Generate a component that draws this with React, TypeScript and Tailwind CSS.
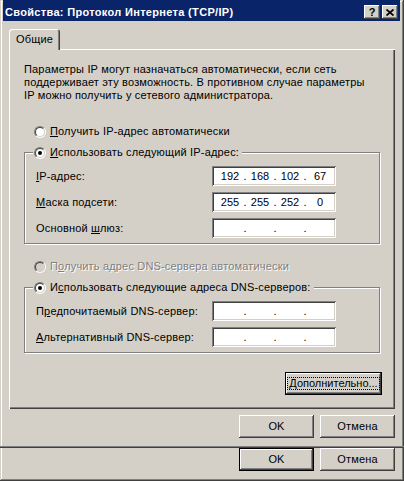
import React from "react";

const BEVEL =
  "shadow-[inset_-1px_-1px_#404040,inset_1px_1px_#fff,inset_-2px_-2px_#808080,inset_2px_2px_#d4d0c8]";

function U({ children }: { children: React.ReactNode }) {
  return <span className="underline underline-offset-[1px]">{children}</span>;
}

function Radio({ checked, disabled }: { checked?: boolean; disabled?: boolean }) {
  return (
    <span className="flex shrink-0 w-[12px] h-[12px] rounded-full border border-t-[#808080] border-l-[#808080] border-b-white border-r-white">
      <span
        className={
          disabled
            ? "flex items-center justify-center w-full h-full rounded-full border border-t-[#404040] border-l-[#404040] border-b-[#d4d0c8] border-r-[#d4d0c8] bg-[#d4d0c8]"
            : "flex items-center justify-center w-full h-full rounded-full border border-t-[#404040] border-l-[#404040] border-b-[#d4d0c8] border-r-[#d4d0c8] bg-white"
        }
      >
        {checked && <span className="w-[4px] h-[4px] rounded-full bg-black" />}
      </span>
    </span>
  );
}

function IpField({ value }: { value: string[] }) {
  return (
    <div className="flex items-center w-[124px] h-[20px] bg-white pl-[7px] tracking-normal shadow-[inset_1px_1px_#808080,inset_-1px_-1px_#fff,inset_2px_2px_#404040,inset_-2px_-2px_#d4d0c8]">
      {value.map((v, i) => (
        <React.Fragment key={i}>
          <span className="w-[22px] text-center">{v}</span>
          {i < 3 && <span className="w-[8px] text-center">.</span>}
        </React.Fragment>
      ))}
    </div>
  );
}

function Row({ label, value, first }: { label: React.ReactNode; value: string[]; first?: boolean }) {
  return (
    <div className={first ? "mt-[7px] flex items-center h-[20px]" : "mt-[6px] flex items-center h-[20px]"}>
      <span className="w-[176px] whitespace-nowrap">{label}</span>
      <IpField value={value} />
    </div>
  );
}

function Button({ children, def }: { children: React.ReactNode; def?: boolean }) {
  return (
    <div
      className={
        def
          ? "flex items-center justify-center w-[75px] h-[23px] bg-[#d4d0c8] border border-black " + BEVEL
          : "flex items-center justify-center w-[75px] h-[23px] bg-[#d4d0c8] " + BEVEL
      }
    >
      {children}
    </div>
  );
}

function CapBtn({ children }: { children: React.ReactNode }) {
  return (
    <div
      className={
        "flex items-center justify-center w-[16px] h-[14px] bg-[#d4d0c8] text-black font-bold text-[11px] leading-none tracking-normal " +
        BEVEL
      }
    >
      {children}
    </div>
  );
}

const empty = ["", "", "", ""];

export default function App() {
  return (
    <div className="relative flex flex-col w-[404px] h-[481px] overflow-hidden bg-[#d4d0c8] font-['Liberation_Sans',Arial,sans-serif] text-[11px] leading-[13px] tracking-[0.17px] text-black shadow-[inset_-1px_-1px_#404040,inset_1px_1px_#d4d0c8,inset_-2px_-2px_#808080,inset_2px_2px_#fff]">
      {/* caption */}
      <div className="flex items-center ml-[3px] mr-[4px] h-[21px] shrink-0 bg-[#0a246a] pl-[2px] pr-[2px]">
        <div className="flex-1 pt-[3px] font-bold text-white whitespace-nowrap tracking-[0.32px]">
          Свойства: Протокол Интернета (TCP/IP)
        </div>
        <div className="flex gap-[2px] mt-[3px]">
          <CapBtn>
            <span className="pt-[1px]">?</span>
          </CapBtn>
          <CapBtn>
            <svg width="8" height="7" viewBox="0 0 8 7">
              <path d="M0.5 0.5 L7.5 6.5 M7.5 0.5 L0.5 6.5" stroke="#000" strokeWidth="1.7" fill="none" />
            </svg>
          </CapBtn>
        </div>
      </div>

      {/* tab */}
      <div className="relative z-10 mt-[8px] ml-[9px] -mb-[1px] flex items-center justify-center w-[51px] h-[21px] shrink-0 bg-[#d4d0c8] rounded-t-[3px] shadow-[inset_1px_1px_#fff,inset_-1px_0_#404040,inset_-2px_0_#808080]">
        Общие
      </div>

      {/* tab page */}
      <div className="flex flex-col ml-[9px] w-[386px] h-[360px] shrink-0 pt-[14px] px-[15px] shadow-[inset_1px_1px_#fff,inset_-1px_-1px_#404040,inset_-2px_-2px_#808080]">
        <p className="whitespace-nowrap">
          Параметры IP могут назначаться автоматически, если сеть
          <br />
          поддерживает эту возможность. В противном случае параметры
          <br />
          IP можно получить у сетевого администратора.
        </p>

        <div className="mt-[23px] ml-[10px] flex items-center gap-[4px] h-[13px]">
          <Radio />
          <span>
            <U>П</U>олучить IP-адрес автоматически
          </span>
        </div>

        <div className="mt-[14px] flex flex-col pl-[11px] pb-[5px] border border-[#808080] shadow-[inset_1px_1px_#fff,1px_1px_#fff]">
          <div className="-mt-[7px] -ml-[3px] self-start flex items-center gap-[4px] h-[13px] bg-[#d4d0c8] pl-[1px] pr-[3px]">
            <Radio checked />
            <span>
              <U>И</U>спользовать следующий IP-адрес:
            </span>
          </div>
          <Row first label={<><U>I</U>P-адрес:</>} value={["192", "168", "102", "67"]} />
          <Row label={<><U>М</U>аска подсети:</>} value={["255", "255", "252", "0"]} />
          <Row label={<>Основной <U>ш</U>люз:</>} value={empty} />
        </div>

        <div className="mt-[16px] ml-[10px] flex items-center gap-[4px] h-[13px]">
          <Radio disabled />
          <span className="text-[#808080] [text-shadow:1px_1px_0_#fff]">
            П<U>о</U>лучить адрес DNS-сервера автоматически
          </span>
        </div>

        <div className="mt-[14px] flex flex-col pl-[11px] pb-[5px] border border-[#808080] shadow-[inset_1px_1px_#fff,1px_1px_#fff]">
          <div className="-mt-[7px] -ml-[3px] self-start flex items-center gap-[4px] h-[13px] bg-[#d4d0c8] pl-[1px] pr-[3px]">
            <Radio checked />
            <span>
              И<U>с</U>пользовать следующие адреса DNS-серверов:
            </span>
          </div>
          <Row first label={<>П<U>р</U>едпочитаемый DNS-сервер:</>} value={empty} />
          <Row label={<><U>А</U>льтернативный DNS-сервер:</>} value={empty} />
        </div>

        <div
          className={
            "mt-[19px] -mr-[2px] self-end flex items-center justify-center w-[97px] h-[23px] border border-black " +
            BEVEL
          }
        >
          <span className="px-[1px] border border-dotted border-black leading-[11px] whitespace-nowrap tracking-normal">
            <U>Д</U>ополнительно...
          </span>
        </div>
      </div>

      {/* buttons */}
      <div className="mt-[6px] flex justify-end gap-[6px] pr-[9px] shrink-0">
        <Button>OK</Button>
        <Button>Отмена</Button>
      </div>

      <div className="mt-[8px] h-[2px] shrink-0 border-t border-t-[#808080] border-b border-b-[#404040]" />

      <div className="flex justify-end gap-[6px] pr-[9px] shrink-0">
        <Button def>OK</Button>
        <Button>Отмена</Button>
      </div>
    </div>
  );
}
